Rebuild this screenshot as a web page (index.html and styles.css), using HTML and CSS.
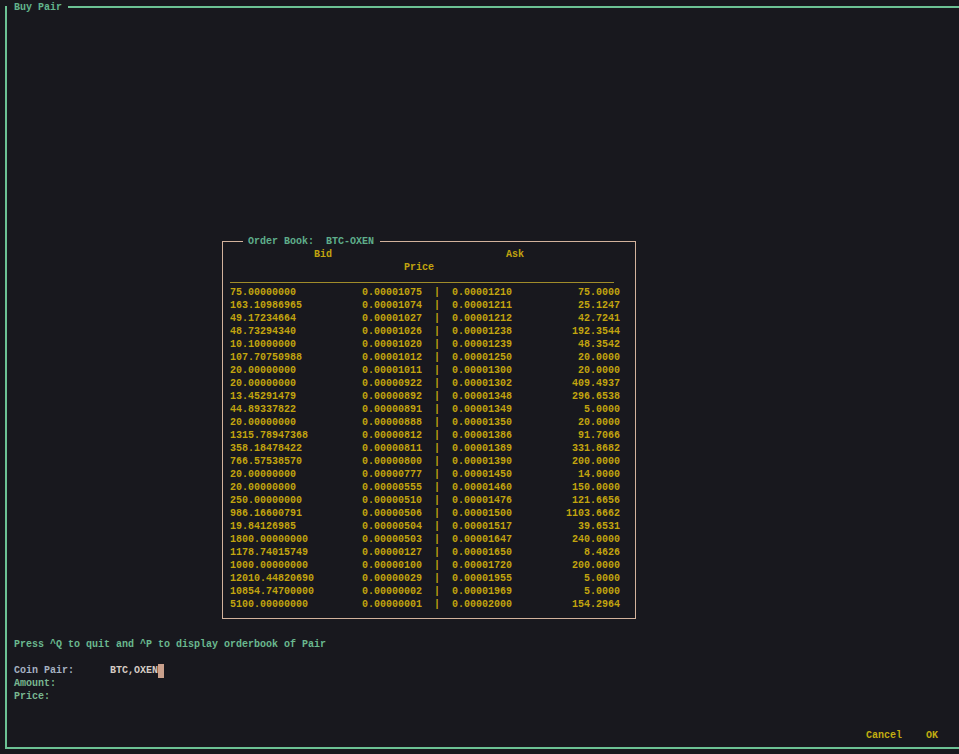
FILE: index.html
```html
<!DOCTYPE html>
<html lang="en">
<head>
<meta charset="utf-8">
<title>Buy Pair</title>
<link rel="stylesheet" href="styles.css">
</head>
<body>
<div class="frame">
  <div class="frame-title">Buy Pair</div>
  <p class="hint">Press ^Q to quit and ^P to display orderbook of Pair</p>
  <div class="form">
    <div class="field"><span class="label label-coin">Coin Pair:</span><span class="value">BTC,OXEN<span class="cursor"></span></span></div>
    <div class="field"><span class="label">Amount:</span></div>
    <div class="field"><span class="label">Price:</span></div>
  </div>
  <div class="actions"><span class="btn">Cancel</span><span class="btn">OK</span></div>
</div>

<div class="book">
  <div class="book-title">Order Book:&nbsp;&nbsp;BTC-OXEN</div>
  <div class="book-head"><span class="h-bid">Bid</span><span class="h-ask">Ask</span></div>
  <div class="book-head"><span class="h-price">Price</span></div>
  <div class="rule-row"><div class="rule"></div></div>
  <div class="rows">
    <div class="row"><span>75.00000000</span><span>0.00001075</span><span class="sep">|</span><span>0.00001210</span><span class="amt">75.0000</span></div>
    <div class="row"><span>163.10986965</span><span>0.00001074</span><span class="sep">|</span><span>0.00001211</span><span class="amt">25.1247</span></div>
    <div class="row"><span>49.17234664</span><span>0.00001027</span><span class="sep">|</span><span>0.00001212</span><span class="amt">42.7241</span></div>
    <div class="row"><span>48.73294340</span><span>0.00001026</span><span class="sep">|</span><span>0.00001238</span><span class="amt">192.3544</span></div>
    <div class="row"><span>10.10000000</span><span>0.00001020</span><span class="sep">|</span><span>0.00001239</span><span class="amt">48.3542</span></div>
    <div class="row"><span>107.70750988</span><span>0.00001012</span><span class="sep">|</span><span>0.00001250</span><span class="amt">20.0000</span></div>
    <div class="row"><span>20.00000000</span><span>0.00001011</span><span class="sep">|</span><span>0.00001300</span><span class="amt">20.0000</span></div>
    <div class="row"><span>20.00000000</span><span>0.00000922</span><span class="sep">|</span><span>0.00001302</span><span class="amt">409.4937</span></div>
    <div class="row"><span>13.45291479</span><span>0.00000892</span><span class="sep">|</span><span>0.00001348</span><span class="amt">296.6538</span></div>
    <div class="row"><span>44.89337822</span><span>0.00000891</span><span class="sep">|</span><span>0.00001349</span><span class="amt">5.0000</span></div>
    <div class="row"><span>20.00000000</span><span>0.00000888</span><span class="sep">|</span><span>0.00001350</span><span class="amt">20.0000</span></div>
    <div class="row"><span>1315.78947368</span><span>0.00000812</span><span class="sep">|</span><span>0.00001386</span><span class="amt">91.7066</span></div>
    <div class="row"><span>358.18478422</span><span>0.00000811</span><span class="sep">|</span><span>0.00001389</span><span class="amt">331.8682</span></div>
    <div class="row"><span>766.57538570</span><span>0.00000800</span><span class="sep">|</span><span>0.00001390</span><span class="amt">200.0000</span></div>
    <div class="row"><span>20.00000000</span><span>0.00000777</span><span class="sep">|</span><span>0.00001450</span><span class="amt">14.0000</span></div>
    <div class="row"><span>20.00000000</span><span>0.00000555</span><span class="sep">|</span><span>0.00001460</span><span class="amt">150.0000</span></div>
    <div class="row"><span>250.00000000</span><span>0.00000510</span><span class="sep">|</span><span>0.00001476</span><span class="amt">121.6656</span></div>
    <div class="row"><span>986.16600791</span><span>0.00000506</span><span class="sep">|</span><span>0.00001500</span><span class="amt">1103.6662</span></div>
    <div class="row"><span>19.84126985</span><span>0.00000504</span><span class="sep">|</span><span>0.00001517</span><span class="amt">39.6531</span></div>
    <div class="row"><span>1800.00000000</span><span>0.00000503</span><span class="sep">|</span><span>0.00001647</span><span class="amt">240.0000</span></div>
    <div class="row"><span>1178.74015749</span><span>0.00000127</span><span class="sep">|</span><span>0.00001650</span><span class="amt">8.4626</span></div>
    <div class="row"><span>1000.00000000</span><span>0.00000100</span><span class="sep">|</span><span>0.00001720</span><span class="amt">200.0000</span></div>
    <div class="row"><span>12010.44820690</span><span>0.00000029</span><span class="sep">|</span><span>0.00001955</span><span class="amt">5.0000</span></div>
    <div class="row"><span>10854.74700000</span><span>0.00000002</span><span class="sep">|</span><span>0.00001969</span><span class="amt">5.0000</span></div>
    <div class="row"><span>5100.00000000</span><span>0.00000001</span><span class="sep">|</span><span>0.00002000</span><span class="amt">154.2964</span></div>
  </div>
</div>
</body>
</html>
```
FILE: styles.css
```css
html, body {
  margin: 0;
  padding: 0;
  background: #18181e;
}
body {
  width: 959px;
  height: 754px;
  overflow: hidden;
  font-family: "Liberation Mono", "DejaVu Sans Mono", monospace;
  font-weight: bold;
  font-size: 10px;
  line-height: 13px;
  position: relative;
}

.frame {
  position: relative;
  box-sizing: border-box;
  margin: 6px 0 0 5px;
  height: 743px;
  border: 2px solid #6cc194;
  border-right: none;
  padding: 0 0 5px 7px;
  display: flex;
  flex-direction: column;
  justify-content: flex-end;
}
.frame-title {
  position: absolute;
  top: -7px;
  left: 0;
  padding: 0 6px 0 7px;
  background: #18181e;
  color: #62b48c;
}

.hint {
  margin: 0;
  color: #6ab98f;
}
.form {
  margin-top: 13px;
}
.field {
  display: flex;
  height: 13px;
}
.label {
  width: 16ch;
  color: #78b790;
}
.label-coin {
  color: #a6b2c2;
}
.value {
  color: #d6ccc4;
  display: flex;
}
.cursor {
  width: 6px;
  height: 14px;
  background: #c9a08c;
}

.actions {
  margin-top: 26px;
  display: flex;
  justify-content: flex-end;
  gap: 24px;
  padding-right: 21px;
}
.btn {
  color: #c2ae10;
}

.book {
  position: absolute;
  left: 222px;
  top: 241px;
  width: 414px;
  height: 378px;
  box-sizing: border-box;
  border: 1px solid #d2b29c;
  padding: 6px 0 0 7px;
  background: #18181e;
  color: #c2a40e;
}
.book-title {
  position: absolute;
  top: -7px;
  left: 20px;
  padding: 0 6px 0 5px;
  background: #18181e;
  color: #5fae8b;
}
.book-head {
  display: flex;
  height: 13px;
}
.h-bid {
  margin-left: 14ch;
}
.h-ask {
  margin-left: 29ch;
}
.h-price {
  margin-left: 29ch;
}
.rule-row {
  height: 12px;
}
.rule {
  width: 64ch;
  height: 8px;
  border-bottom: 1px solid #a08c2a;
}
.row {
  display: grid;
  grid-template-columns: 22ch 10ch 5ch 10ch 18ch;
  height: 13px;
  white-space: pre;
}
.sep {
  text-align: center;
}
.amt {
  text-align: right;
}
```
